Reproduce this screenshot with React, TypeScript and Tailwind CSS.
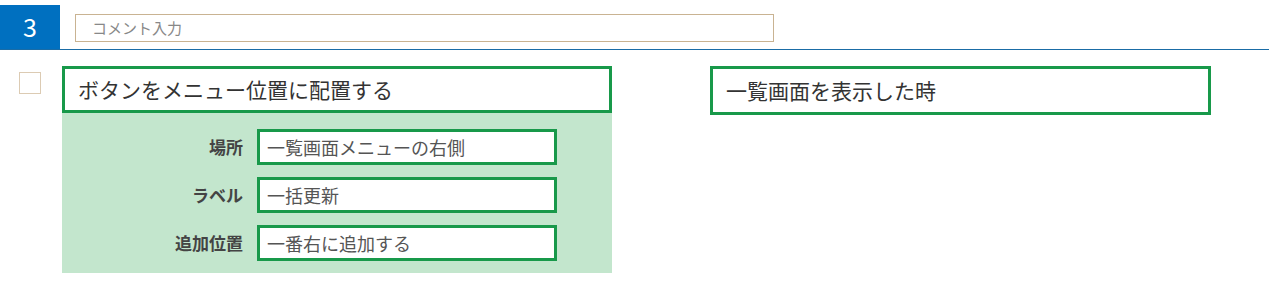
import React from 'react';

const font = { fontFamily: '"Noto Sans CJK JP", "Noto Sans", sans-serif' };

type Field = { label: string; value: string };

const fields: Field[] = [
  { label: '場所', value: '一覧画面メニューの右側' },
  { label: 'ラベル', value: '一括更新' },
  { label: '追加位置', value: '一番右に追加する' },
];

export default function App() {
  return (
    <div className="w-[1269px] h-[284px] bg-white overflow-hidden" style={font}>
      {/* header row */}
      <div className="mt-[5px] flex h-[45px] border-b border-[#1a6ca6]">
        <div className="w-[60px] h-[44px] bg-[#0070c0] text-white text-[25px] flex items-center justify-center">3</div>
        <div className="ml-[15px] mt-[9px] w-[699px] h-[28px] border border-[#c9b392] flex items-center pl-[16px] text-[15px] text-[#888]">
          コメント入力
        </div>
      </div>

      {/* body */}
      <div className="mt-[16px] flex">
        <div className="ml-[19px] mt-[6px] w-[22px] h-[22px] border border-[#dccbb3] bg-white" />

        <div className="ml-[21px] w-[550px]">
          <div className="h-[47px] border-[3px] border-[#18994a] flex items-center pl-[13px] text-[21px] text-[#333]">
            ボタンをメニュー位置に配置する
          </div>
          <div className="bg-[#c3e6cd] pt-[16px] pb-[12px] flex flex-col gap-[12px]">
            {fields.map(f => (
              <div key={f.label} className="flex items-center">
                <div className="w-[181px] text-right text-[17px] font-bold text-[#444]">{f.label}</div>
                <div className="ml-[14px] w-[300px] h-[36px] bg-white border-[3px] border-[#18994a] flex items-center pl-[7px] text-[18px] text-[#555]">
                  {f.value}
                </div>
              </div>
            ))}
          </div>
        </div>

        <div className="ml-[98px] w-[501px] h-[49px] border-[3px] border-[#18994a] flex items-center pl-[13px] text-[21px] text-[#333]">
          一覧画面を表示した時
        </div>
      </div>
    </div>
  );
}
